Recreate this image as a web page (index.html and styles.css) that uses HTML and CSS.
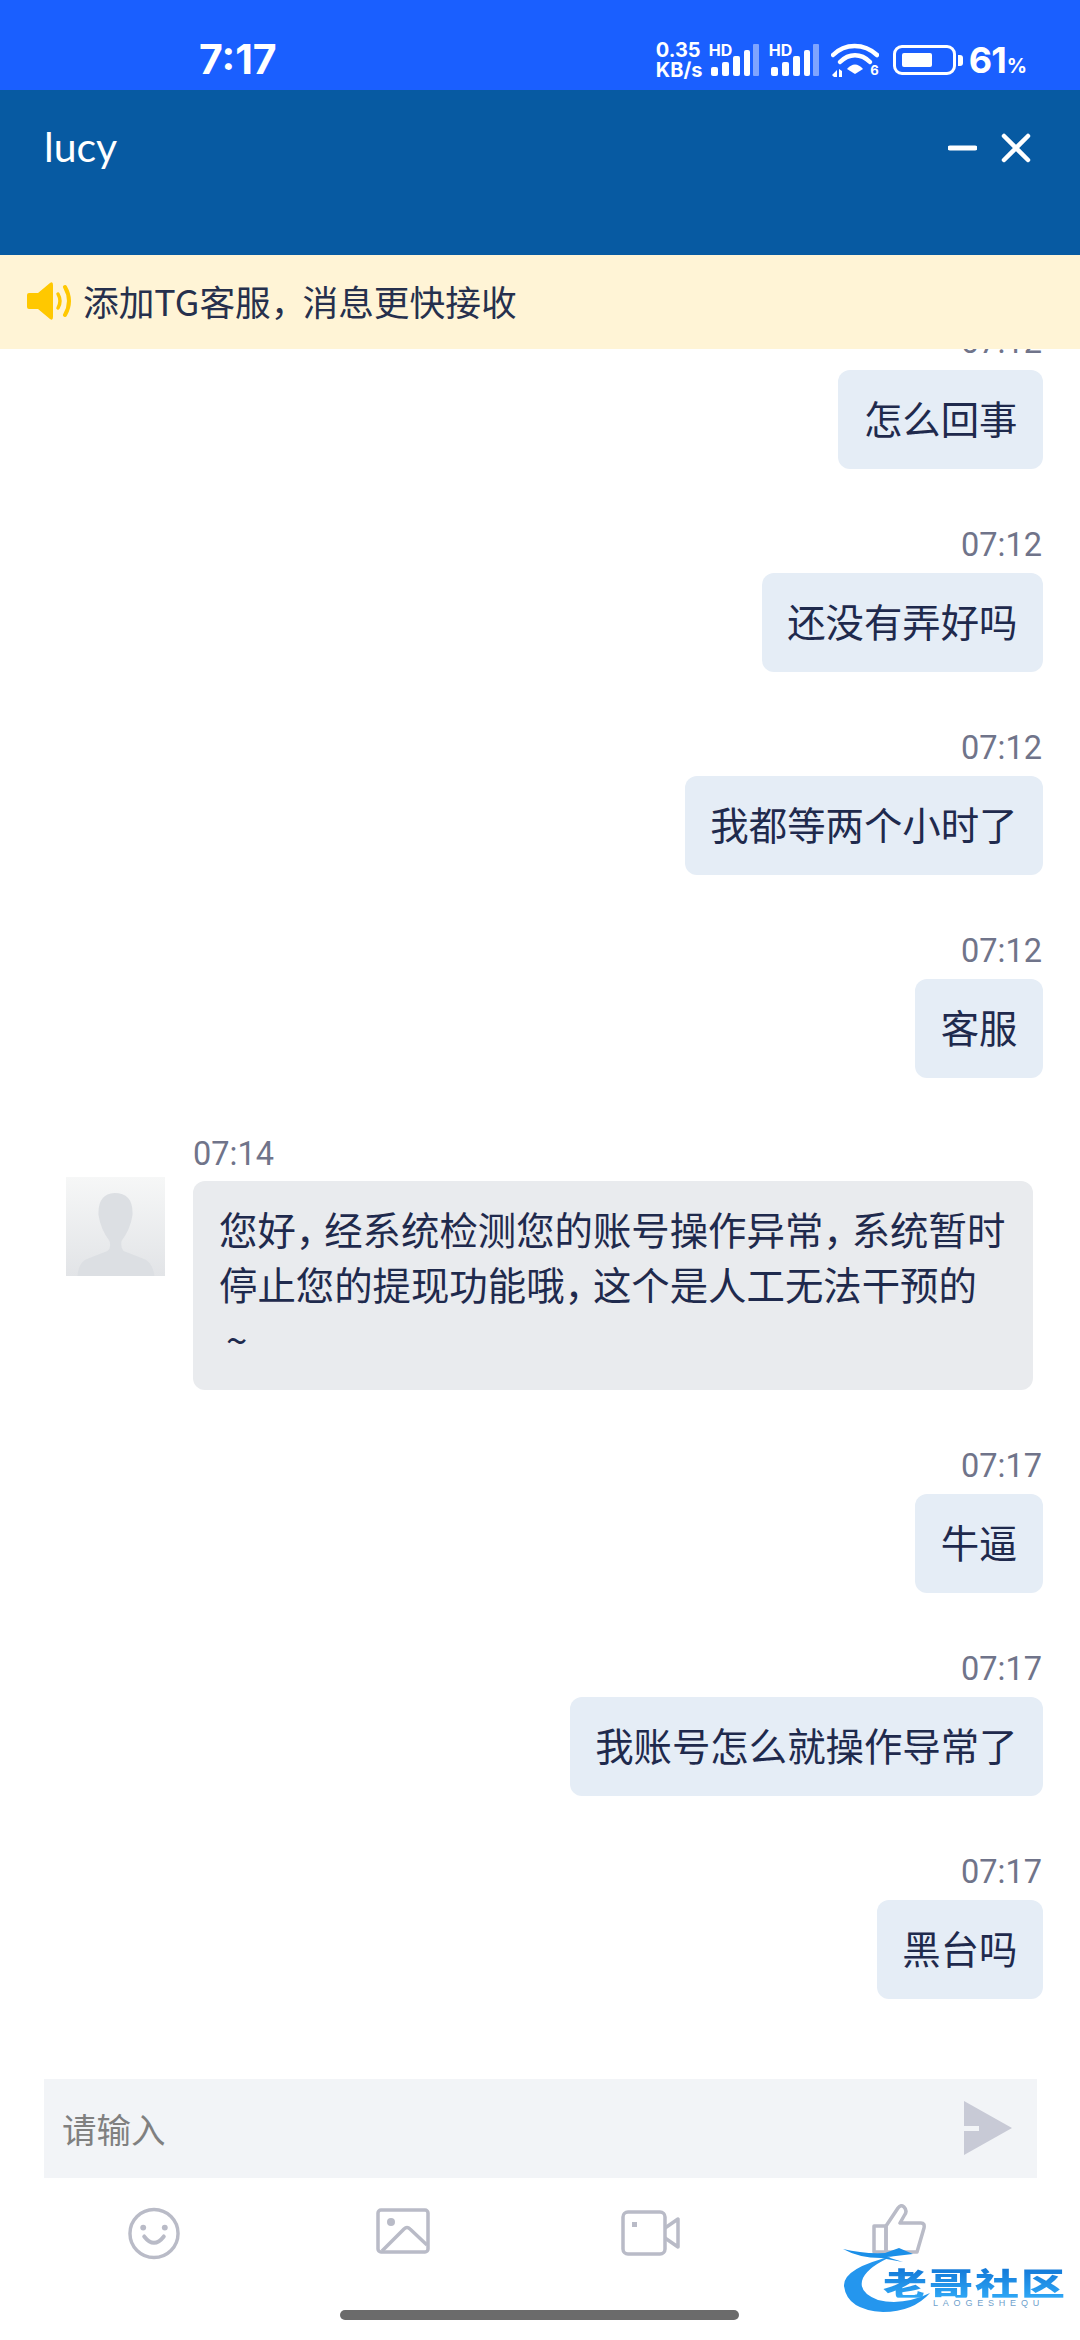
FILE: index.html
```html
<!DOCTYPE html>
<html lang="zh-CN">

<head>
    <meta charset="UTF-8">
    <meta name="viewport" content="width=device-width, initial-scale=1.0">
    <title>lucy</title>
    <link rel="stylesheet" href="styles.css">
</head>

<body>
    <div class="status">
        <span class="clock">7:17</span>
        <div class="status-right">
            <div class="speed"><span>0.35</span><span>KB/s</span></div>
            <div class="signal">
                <span class="hd">HD</span>
                <svg width="50" height="32" viewBox="0 0 50 32">
                    <rect x="2" y="23" width="7" height="9" rx="2" fill="#fff" />
                    <rect x="13" y="18" width="7" height="14" rx="2" fill="#fff" />
                    <rect x="24" y="12" width="7" height="20" rx="2" fill="#fff" />
                    <rect x="35" y="6" width="6" height="26" rx="2" fill="#fff" />
                    <rect x="44" y="0" width="6" height="32" rx="1" fill="#7ea4ff" />
                </svg>
            </div>
            <div class="signal">
                <span class="hd">HD</span>
                <svg width="50" height="32" viewBox="0 0 50 32">
                    <rect x="2" y="23" width="7" height="9" rx="2" fill="#fff" />
                    <rect x="13" y="18" width="7" height="14" rx="2" fill="#fff" />
                    <rect x="24" y="12" width="7" height="20" rx="2" fill="#fff" />
                    <rect x="35" y="6" width="6" height="26" rx="2" fill="#fff" />
                    <rect x="44" y="0" width="6" height="32" rx="1" fill="#7ea4ff" />
                </svg>
            </div>
            <div class="wifi">
                <svg width="48" height="36" viewBox="0 0 48 36">
                    <path d="M2 13 C14 1 33 1 46 13" fill="none" stroke="#fff" stroke-width="4.5" stroke-linecap="round" />
                    <path d="M9 20 C18 11 30 11 39 20" fill="none" stroke="#fff" stroke-width="4.5" stroke-linecap="round" />
                    <path d="M16 27 C21 21 27 21 32 27 L24 32 Z" fill="#fff" />
                    <path d="M1 33 L6 28 V35 H3 Z M8 27 L11 29 V35 H8 Z" fill="#fff" />
                </svg>
                <span class="six">6</span>
            </div>
            <div class="battery"><i></i></div>
            <div class="battery-tip"></div>
            <span class="percent">61<small>%</small></span>
        </div>
    </div>

    <div class="header">
        <span class="name">lucy</span>
        <div class="header-btns">
            <svg width="29" height="30" viewBox="0 0 29 30">
                <path d="M2 15 H27" stroke="#fff" stroke-width="5" stroke-linecap="round" />
            </svg>
            <svg width="30" height="30" viewBox="0 0 30 30">
                <path d="M3 3 L27 27 M27 3 L3 27" stroke="#fff" stroke-width="4.5" stroke-linecap="round" />
            </svg>
        </div>
    </div>

    <div class="notice">
        <svg width="46" height="38" viewBox="0 0 46 38">
            <path d="M1 13 Q1 11 3 11 H12 L24 1 Q27 -1 27 3 V35 Q27 39 24 37 L12 27 H3 Q1 27 1 25 Z" fill="#ffc800" />
            <path d="M32 12 Q36 19 32 26" fill="none" stroke="#ffc800" stroke-width="3.5" stroke-linecap="round" />
            <path d="M39 5 Q47 19 39 33" fill="none" stroke="#ffc800" stroke-width="4" stroke-linecap="round" />
        </svg>
        <span>添加TG客服<i class="comma">，</i>消息更快接收</span>
    </div>

    <div class="list">
        <div class="msg me">
            <div class="time">07:12</div>
            <div class="bubble">怎么回事</div>
        </div>
        <div class="msg me">
            <div class="time">07:12</div>
            <div class="bubble">还没有弄好吗</div>
        </div>
        <div class="msg me">
            <div class="time">07:12</div>
            <div class="bubble">我都等两个小时了</div>
        </div>
        <div class="msg me">
            <div class="time">07:12</div>
            <div class="bubble">客服</div>
        </div>
        <div class="msg other">
            <div class="avatar">
                <svg width="99" height="99" viewBox="0 0 96 99">
                    <path d="M10 99 Q11 84 22 81 L40 74 Q44 71 42 64 Q33 52 31 38 Q30 17 47 16 Q66 16 65 38 Q63 52 54 64 Q53 71 56 74 L74 81 Q85 84 87 99 Z" fill="#dcdfe3" />
                </svg>
            </div>
            <div class="other-body">
                <div class="time">07:14</div>
                <div class="bubble">您好<i class="comma">，</i>经系统检测您的账号操作异常<i class="comma">，</i>系统暂时<br>停止您的提现功能哦<i class="comma">，</i>这个是人工无法干预的<br><i class="tilde">~</i></div>
            </div>
        </div>
        <div class="msg me">
            <div class="time">07:17</div>
            <div class="bubble">牛逼</div>
        </div>
        <div class="msg me">
            <div class="time">07:17</div>
            <div class="bubble">我账号怎么就操作导常了</div>
        </div>
        <div class="msg me">
            <div class="time">07:17</div>
            <div class="bubble">黑台吗</div>
        </div>
    </div>

    <div class="input-box">
        <span>请输入</span>
        <svg width="50" height="56" viewBox="0 0 48 56">
            <path d="M0 1 L48 28 L0 55 V31 H15 V26 H0 Z" fill="#c8cad6" />
        </svg>
    </div>

    <div class="tools">
        <svg class="t-smile" width="54" height="53" viewBox="0 0 54 54" fill="none" stroke="#b9bbc7" stroke-width="3.5">
            <circle cx="27" cy="27" r="24.5" />
            <path d="M17 30 Q27 43 37 30" stroke-width="4" stroke-linecap="round" />
            <circle cx="16" cy="21" r="3" fill="#b9bbc7" stroke="none" />
            <circle cx="38" cy="21" r="3" fill="#b9bbc7" stroke="none" />
        </svg>
        <svg class="t-image" width="54" height="46" viewBox="0 0 54 46" fill="none" stroke="#b9bbc7" stroke-width="3.5">
            <rect x="2" y="2" width="50" height="42" rx="3" />
            <path d="M6 43 L28 21 Q31 18 34 21 L51 37" stroke-linejoin="round" />
            <circle cx="15" cy="14" r="4" fill="#b9bbc7" stroke="none" />
        </svg>
        <svg class="t-video" width="60" height="46" viewBox="0 0 60 46" fill="none" stroke="#b9bbc7" stroke-width="3.5">
            <rect x="2" y="2" width="42" height="42" rx="5" />
            <path d="M44 18 L57 9 V37 L44 28" stroke-linejoin="round" />
            <rect x="11" y="12" width="5" height="5" fill="#b9bbc7" stroke="none" />
        </svg>
        <svg class="t-thumb" width="54" height="50" viewBox="0 0 54 50" fill="none" stroke="#b9bbc7" stroke-width="3.5">
            <path d="M14 22 L26 4 Q29 0 32 3 Q36 7 32 12 L28 19 H49 Q53 19 52 24 L45 48 H14 Z" stroke-linejoin="round" />
            <path d="M2 22 H14 V48 H2 Z" stroke-linejoin="round" />
        </svg>
    </div>

    <div class="home-wrap">
        <div class="home"></div>
    </div>

    <!-- 水印 -->
    <div class="mark">
        <svg width="220" height="66" viewBox="0 0 220 66">
            <path d="M50 8 Q0 20 1 38 Q4 62 40 64 Q70 64 87 45 Q60 58 35 52 Q14 44 20 30 Q26 18 50 8 Z" fill="#2496ee" />
            <path d="M0 1 Q20 6 42 5 L56 0 L70 6 L44 9 L60 14 L38 10 Q16 10 0 1 Z" fill="#1b8fe8" />
        </svg>
        <b>老哥社区</b>
        <em>LAOGESHEQU</em>
    </div>
</body>

</html>
```

FILE: styles.css
```css
* {
    padding: 0;
    margin: 0;
    box-sizing: border-box;
}

body {
    position: relative;
    display: flex;
    flex-direction: column;
    width: 1080px;
    height: 2340px;
    overflow: hidden;
    background-color: #fff;
    color: #1f2a4d;
    font-family: "Noto Sans CJK SC", "Noto Sans", sans-serif;
}

.status {
    display: flex;
    align-items: center;
    justify-content: space-between;
    flex: none;
    height: 90px;
    padding: 0 54px 0 199px;
    background-color: #1a5fff;
    color: #fff;
}

.clock {
    margin-top: 28px;
    font: 700 41px/1 Inter, sans-serif;
}

.status-right {
    display: flex;
    align-items: center;
    margin-top: 30px;
}

.speed {
    display: flex;
    flex-direction: column;
    width: 53px;
    font: 700 20px/20px Inter, sans-serif;
}

.signal {
    position: relative;
    width: 50px;
    height: 32px;
    margin-right: 10px;
}

.signal svg {
    display: block;
}

.hd {
    position: absolute;
    left: 0;
    top: -1px;
    font: 700 16px/14px Inter, sans-serif;
}

.wifi {
    position: relative;
    width: 48px;
    height: 36px;
    margin-left: 2px;
    margin-right: 14px;
}

.wifi svg {
    display: block;
}

.six {
    position: absolute;
    right: 0;
    bottom: 1px;
    font: 700 13px/13px Inter, sans-serif;
}

.battery {
    width: 63px;
    height: 30px;
    padding: 5px 6px;
    border: 3px solid #fff;
    border-radius: 9px;
}

.battery i {
    display: block;
    width: 30px;
    height: 14px;
    background-color: #fff;
    border-radius: 2px;
}

.battery-tip {
    width: 5px;
    height: 11px;
    margin-left: 2px;
    margin-right: 6px;
    background-color: #fff;
    border-radius: 0 3px 3px 0;
}

.percent {
    font: 700 36px/1 Inter, sans-serif;
    letter-spacing: -1px;
}

.percent small {
    margin-left: 1px;
    font-size: 20px;
}

.header {
    display: flex;
    justify-content: space-between;
    flex: none;
    height: 165px;
    padding: 32px 49px 0 44px;
    background-color: #075aa2;
    color: #fff;
}

.name {
    font: 400 41px/50px Lato, sans-serif;
}

.header-btns {
    display: flex;
    gap: 24px;
    height: 30px;
    margin-top: 11px;
}

.notice {
    display: flex;
    align-items: center;
    flex: none;
    gap: 11px;
    height: 94px;
    padding: 0 0 3px 26px;
    background-color: #fff4d6;
    font-size: 35.7px;
    color: #26304d;
}

.comma {
    font-style: normal;
    letter-spacing: -10px;
}

.notice .comma {
    letter-spacing: -4px;
}

.list {
    display: flex;
    flex-direction: column;
    flex: 1;
    gap: 56px;
    min-height: 0;
    overflow: hidden;
    padding: 0 37px 0 66px;
}

.msg:first-child {
    margin-top: -27px;
}

.me {
    display: flex;
    flex-direction: column;
    align-items: flex-end;
}

.other {
    display: flex;
    gap: 28px;
}

.time {
    height: 40px;
    margin-bottom: 8px;
    margin-right: 1px;
    font: 400 32.5px/40px Roboto, sans-serif;
    color: #70748a;
}

.bubble {
    padding: 20px 25.5px 24px;
    font-size: 38.4px;
    line-height: 55px;
    border-radius: 12px;
    background-color: #e5edf6;
}

.other .time {
    margin-bottom: 7px;
}

.other .bubble {
    width: 840px;
    padding-left: 26px;
    white-space: nowrap;
    background-color: #e9ebee;
}

.tilde {
    margin-left: 7px;
    font-style: normal;
}

.avatar {
    flex: none;
    width: 99px;
    height: 99px;
    margin-top: 43px;
    background: linear-gradient(#f6f7f7, #e2e4e7);
}

.avatar svg {
    display: block;
}

.input-box {
    display: flex;
    align-items: center;
    justify-content: space-between;
    flex: none;
    width: 993px;
    height: 99px;
    margin-left: 44px;
    padding: 0 24px 2px 18px;
    background-color: #f2f4f7;
    font-size: 34.5px;
    color: #808080;
}

.tools {
    display: flex;
    flex: none;
    height: 132px;
    padding-top: 25px;
}

.tools svg {
    display: block;
}

.t-smile {
    margin-left: 127px;
    margin-top: 4px;
}

.t-image {
    margin-left: 195px;
    margin-top: 5px;
}

.t-video {
    margin-left: 191px;
    margin-top: 7px;
}

.t-thumb {
    margin-left: 191px;
    margin-top: 1px;
}

.home-wrap {
    flex: none;
    height: 30px;
}

.home {
    width: 399px;
    height: 10px;
    margin-left: 340px;
    background-color: #6b6b6b;
    border-radius: 5px;
}

/* 水印 */
.mark {
    position: absolute;
    left: 843px;
    top: 2248px;
    width: 220px;
    height: 66px;
}

.mark svg {
    display: block;
}

.mark b {
    position: absolute;
    left: 40px;
    top: 18px;
    font-size: 44px;
    font-weight: 900;
    line-height: 44px;
    letter-spacing: 2px;
    white-space: nowrap;
    color: transparent;
    background: linear-gradient(#1176d6, #2ea6f5);
    background-clip: text;
    -webkit-background-clip: text;
    transform: scaleY(.72);
    transform-origin: top left;
}

.mark em {
    position: absolute;
    left: 90px;
    top: 51px;
    font: normal 400 9px/9px "Liberation Sans", sans-serif;
    letter-spacing: 4.8px;
    white-space: nowrap;
    color: #6f9fcc;
}
```
